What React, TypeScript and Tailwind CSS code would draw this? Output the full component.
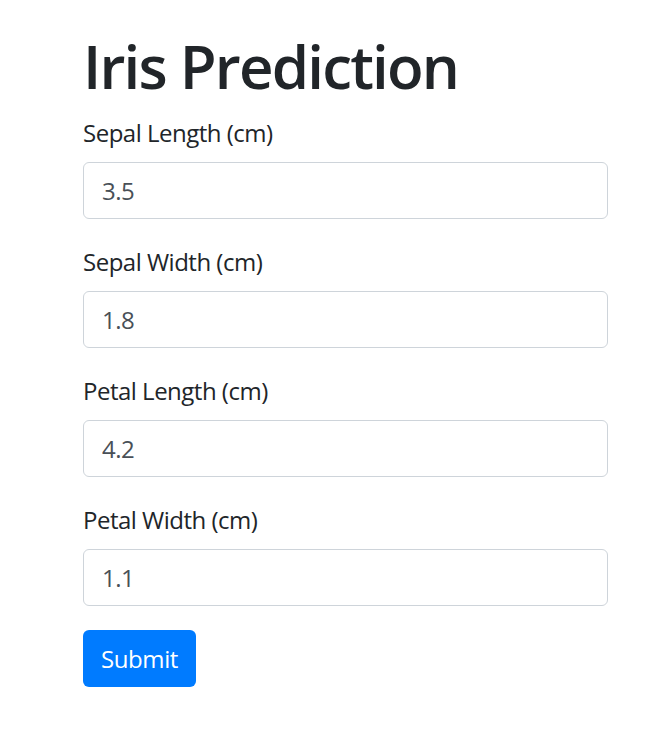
const fields = [
  { label: "Sepal Length (cm)", value: "3.5" },
  { label: "Sepal Width (cm)", value: "1.8" },
  { label: "Petal Length (cm)", value: "4.2" },
  { label: "Petal Width (cm)", value: "1.1" },
];

export default function App() {
  return (
    <div
      className="min-h-screen bg-white pt-[30px] pl-[83px] text-[#212529]"
      style={{ fontFamily: '"Open Sans", "Noto Sans", sans-serif' }}
    >
      <div className="w-[525px]">
        <h1 className="mb-[12px] text-[60px] font-semibold leading-[1.2] tracking-[-1.8px]">
          Iris Prediction
        </h1>
        <form onSubmit={(e) => e.preventDefault()}>
          {fields.map((f) => (
            <div key={f.label} className="mb-[24px]">
              <label className="mb-[12px] block pt-[1px] text-[24px] leading-[35px] tracking-[-0.5px]">
                {f.label}
              </label>
              <input
                type="text"
                defaultValue={f.value}
                className="block h-[57px] w-full rounded-[6px] border-[1.5px] border-[#ced4da] bg-white px-[18px] text-[24px] leading-[36px] tracking-[-0.5px] text-[#495057] outline-none"
              />
            </div>
          ))}
          <button
            type="submit"
            className="h-[57px] rounded-[6px] bg-[#007bff] px-[18px] text-[24px] leading-[36px] tracking-[-0.4px] text-white"
          >
            Submit
          </button>
        </form>
      </div>
    </div>
  );
}
